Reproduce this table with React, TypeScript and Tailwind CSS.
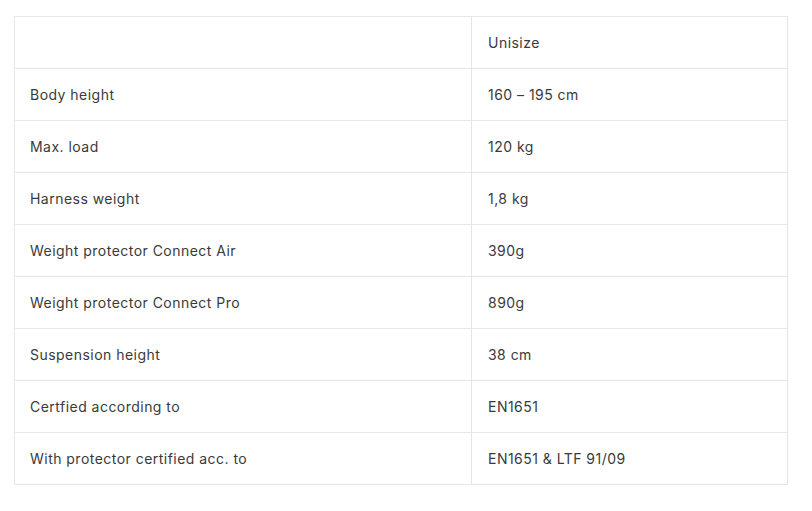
import React from "react";

const rows: [string, string][] = [
  ["", "Unisize"],
  ["Body height", "160 – 195 cm"],
  ["Max. load", "120 kg"],
  ["Harness weight", "1,8 kg"],
  ["Weight protector Connect Air", "390g"],
  ["Weight protector Connect Pro", "890g"],
  ["Suspension height", "38 cm"],
  ["Certfied according to", "EN1651"],
  ["With protector certified acc. to", "EN1651 & LTF 91/09"],
];

function App(): JSX.Element {
  return (
    <div
      className="w-[812px] h-[511px] bg-white pt-[16px] pl-[14px]"
      style={{ fontFamily: "Inter, 'Noto Sans', sans-serif" }}
    >
      <table className="w-[774px] table-fixed border-collapse text-[14px] tracking-[0.47px] text-[#3a3a3a]">
        <colgroup>
          <col className="w-[457px]" />
          <col />
        </colgroup>
        <tbody>
          {rows.map(([label, value], i) => (
            <tr key={i} className="h-[52px]">
              <td className="border border-[#e6e6e6] px-[15px] align-middle">{label}</td>
              <td className="border border-[#e6e6e6] px-[16px] align-middle">{value}</td>
            </tr>
          ))}
        </tbody>
      </table>
    </div>
  );
}

export default App;
